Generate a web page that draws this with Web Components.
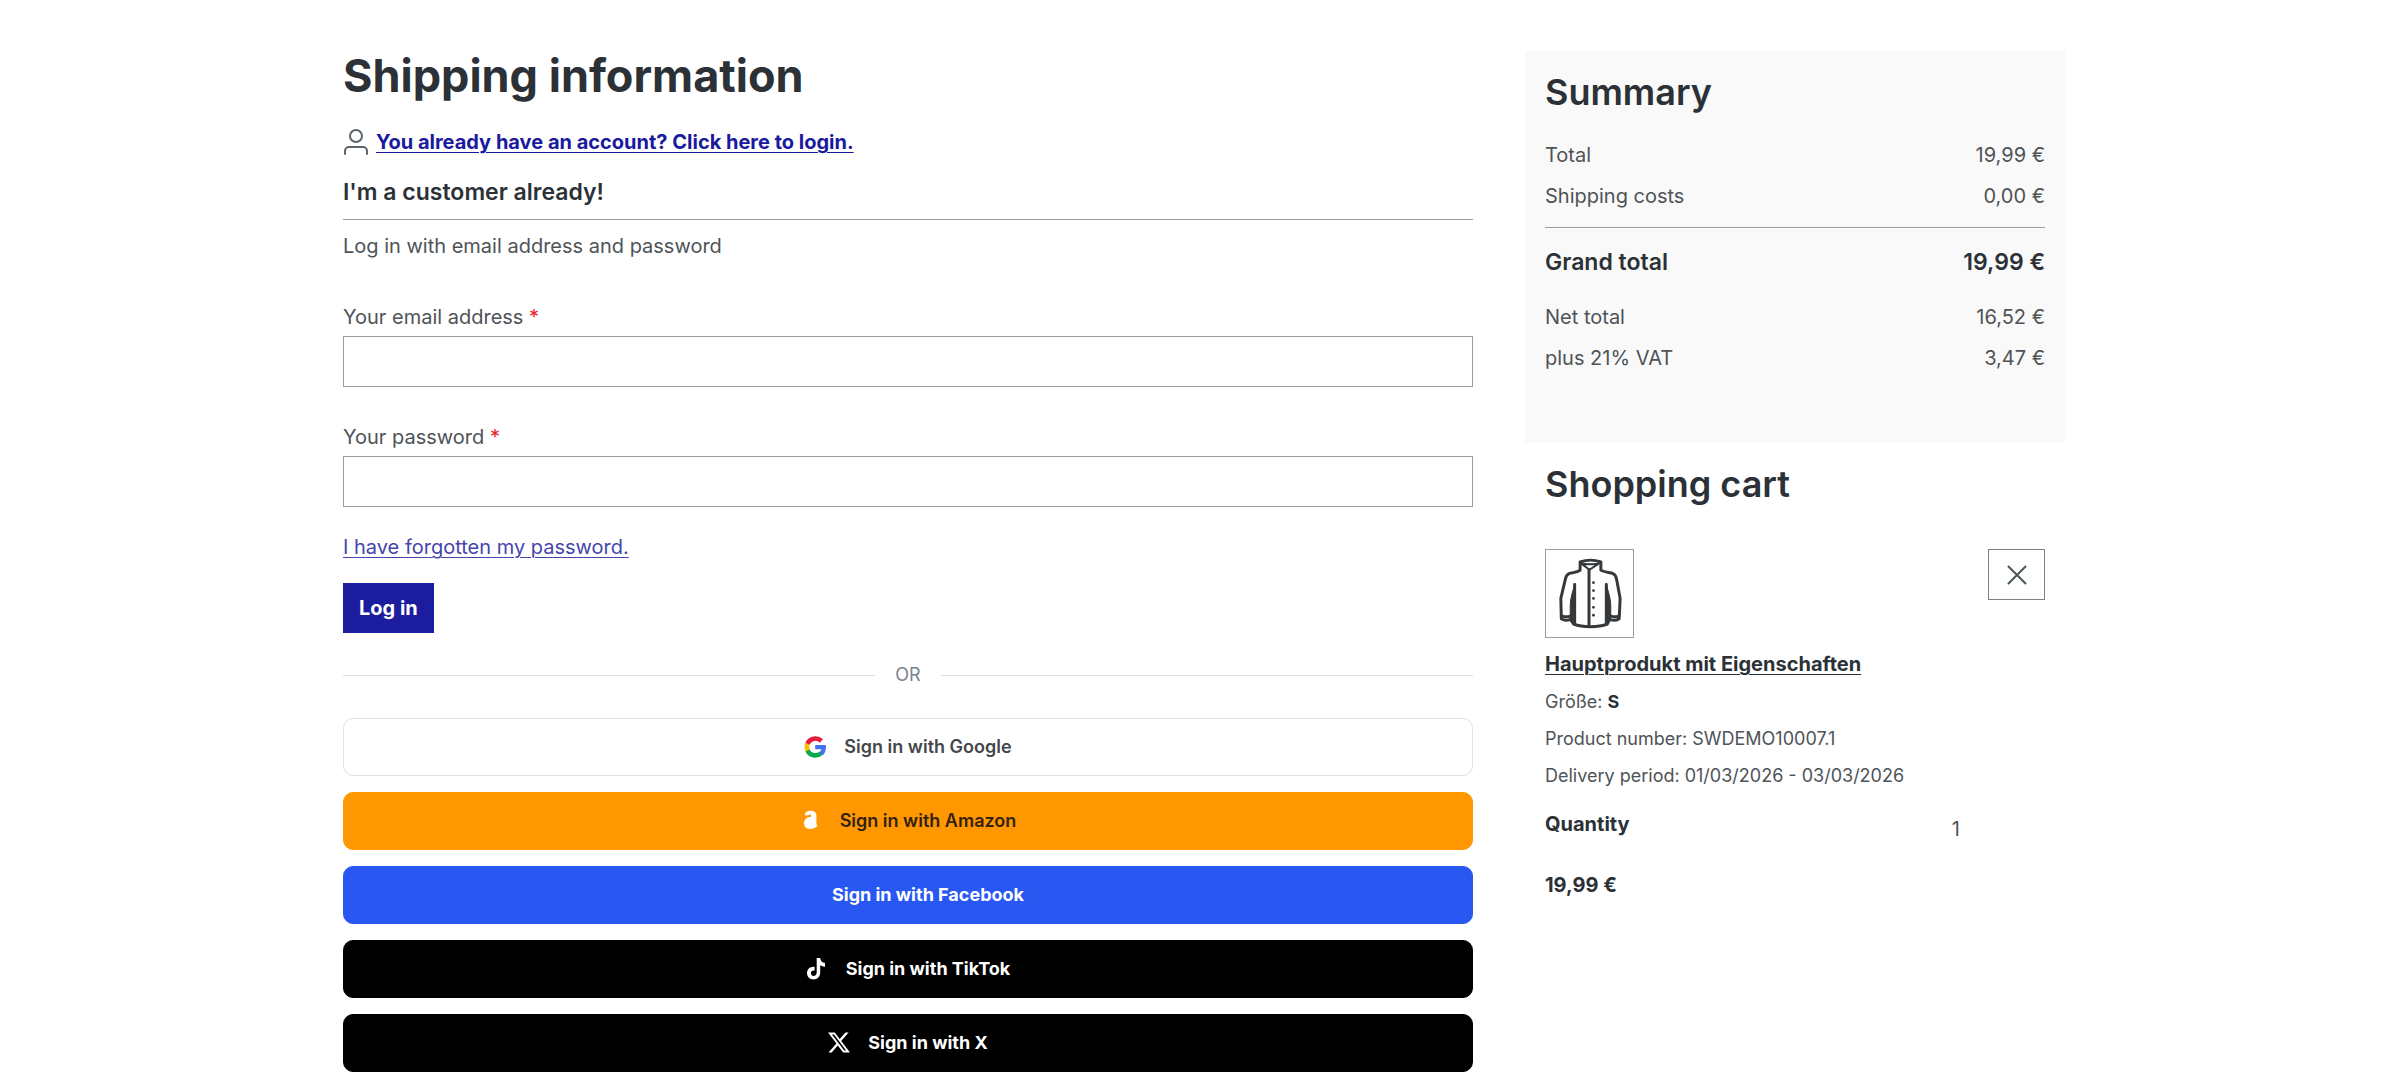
<!DOCTYPE html>
<html lang="en">
<head>
<meta charset="utf-8">
<meta name="viewport" content="width=device-width, initial-scale=1">
<title>Shipping information</title>
<style>
    body {
        margin: 0;
        background: #fff;
        color: #4e5357;
        font-family: Inter, "Liberation Sans", sans-serif;
        font-size: 20px;
        line-height: 30px;
    }
</style>
</head>
<body>

<checkout-page>
    <login-form slot="main"></login-form>
    <or-divider slot="main">OR</or-divider>
    <social-list slot="main">
        <social-button brand="google">Sign in with Google</social-button>
        <social-button brand="amazon">Sign in with Amazon</social-button>
        <social-button brand="facebook">Sign in with Facebook</social-button>
        <social-button brand="tiktok">Sign in with TikTok</social-button>
        <social-button brand="x">Sign in with X</social-button>
    </social-list>
    <order-summary slot="side"></order-summary>
    <shopping-cart slot="side">
        <cart-item></cart-item>
    </shopping-cart>
</checkout-page>

<script>
// small helper: every element clones its own template
function makeTemplate(html) {
    var template = document.createElement("template");
    template.innerHTML = html;
    return template;
}

class BaseElement extends HTMLElement {
    constructor() {
        super();
        this.attachShadow({mode: "open"});
        this.shadowRoot.appendChild(this.constructor.template.content.cloneNode(true));
    }
}

// PAGE: two columns, form left and basket right
class CheckoutPage extends BaseElement {
    static template = makeTemplate(`
<style>
    :host { display: block; padding: 51px 0 0 3px; }
    .grid {
        display: grid;
        grid-template-columns: minmax(0, 113fr) minmax(0, 54fr);
        gap: 52px;
        align-items: start;
        max-width: 1722px;
        margin: 0 auto;
    }
    @media (max-width: 900px) {
        .grid { grid-template-columns: minmax(0, 1fr); padding: 0 20px; }
    }
</style>
<div class="grid">
    <main><slot name="main"></slot></main>
    <aside><slot name="side"></slot></aside>
</div>`);
}
customElements.define("checkout-page", CheckoutPage);

// TEXT FIELD with label
class TextField extends BaseElement {
    static template = makeTemplate(`
<style>
    :host { display: block; }
    label { display: block; margin-bottom: 4px; }
    .star { color: #e52427; }
    input {
        display: block;
        box-sizing: border-box;
        width: 100%;
        height: 51px;
        padding: 8px 16px;
        border: 1px solid #989ea6;
        border-radius: 0;
        background: #fff;
        color: inherit;
        font: inherit;
    }
</style>
<label for="field"><slot></slot> <span class="star">*</span></label>
<input id="field" required>`);

    connectedCallback() {
        this.shadowRoot.querySelector("input").type = this.getAttribute("type") || "text";
    }
}
customElements.define("text-field", TextField);

// LOGIN FORM
class LoginForm extends BaseElement {
    static template = makeTemplate(`
<style>
    :host { display: block; }
    h1, h2, p { margin: 0; }
    h1 { font-size: 45px; line-height: 50px; font-weight: 700; color: #2b3136; }
    .account { display: flex; align-items: center; gap: 7px; margin-top: 26px; }
    .account svg { width: 26px; height: 26px; flex: none; }
    .account a { color: #1a1a9e; font-weight: 700; }
    h2 {
        margin-top: 19px;
        padding-bottom: 11px;
        border-bottom: 1px solid #989ea6;
        font-size: 23px;
        line-height: 32px;
        font-weight: 600;
        color: #2b3136;
    }
    .hint { margin: 11px 0 41px; }
    text-field + text-field { margin-top: 35px; }
    .forgot { margin: 25px 0 21px; }
    .forgot a { color: #4545ac; }
    a { text-underline-offset: 3px; text-decoration-thickness: 1px; }
    button {
        display: block;
        height: 50px;
        padding: 0 16px;
        border: 0;
        background: #1c1c9f;
        color: #fff;
        font: inherit;
        font-weight: 700;
        cursor: pointer;
    }
</style>
<h1>Shipping information</h1>
<div class="account">
    <svg viewBox="0 0 26 26" fill="none" stroke="#5b646b" stroke-width="2" stroke-linecap="round" aria-hidden="true">
        <circle cx="13" cy="7" r="6"/>
        <path d="M2 25v-3a4 4 0 0 1 4-4h14a4 4 0 0 1 4 4v3"/>
    </svg>
    <a href="#login">You already have an account? Click here to login.</a>
</div>
<form id="login">
    <h2>I'm a customer already!</h2>
    <p class="hint">Log in with email address and password</p>
    <text-field type="email">Your email address</text-field>
    <text-field type="password">Your password</text-field>
    <p class="forgot"><a href="#recover">I have forgotten my password.</a></p>
    <button type="submit">Log in</button>
</form>`);
}
customElements.define("login-form", LoginForm);

// DIVIDER
class OrDivider extends BaseElement {
    static template = makeTemplate(`
<style>
    :host {
        display: flex;
        align-items: center;
        gap: 20px;
        margin: 28px 0 29px;
        font-size: 18px;
        line-height: 28px;
        color: #798490;
    }
    :host::before, :host::after {
        content: "";
        flex: 1;
        height: 1px;
        background: #dcdfe2;
    }
</style>
<slot></slot>`);
}
customElements.define("or-divider", OrDivider);

// SOCIAL LOGIN
class SocialList extends BaseElement {
    static template = makeTemplate(`
<style>
    :host { display: flex; flex-direction: column; gap: 16px; }
</style>
<slot></slot>`);
}
customElements.define("social-list", SocialList);

var brandIcons = {
    google: `
        <g fill="none" stroke-width="4.600">
            <path stroke="#fbbc05" d="M3.900 15a8.700 8.700 0 0 1 0-8"/>
            <path stroke="#ea1a3c" d="M3.500 7.600A8.700 8.700 0 0 1 17.400 5"/>
            <path stroke="#0da94f" d="M3.500 14.400A8.700 8.700 0 0 0 17 17.300"/>
        </g>
        <path fill="#4272f0" d="M11.200 9h10.600c.6 4-.5 7.800-3 10.200l-3.600-2.800a5 5 0 0 0 2.100-3.200h-6.100z"/>`,
    amazon: `
        <path fill="#fff" d="M4.600 5C5.400 2.200 7.600.8 10.500.8c3.800 0 5.900 1.800 5.900 5v6.700c0 1.600.3 2.600 1 3.400l-2 1.700c-1.200.9-3 1.400-5.400 1.400C6.300 19 4 16.800 4 13.300c0-2.600 1.200-4.500 3.200-5.500z"/>
        <path fill="#ff9700" d="M4 5.200l4.200.3c.6-1 1.600-1.200 2.800-.6v2.200c-2.400 0-4.600.5-6.600 1.800z"/>`,
    facebook: ``,
    tiktok: `
        <path fill="#fff" d="M10.700 0h3.500c.3 2.800 1.900 4.600 4.800 4.900v3.800c-1.800.1-3.400-.4-4.800-1.400v7.300c0 4.200-3 7-6.700 7-3.800 0-6.500-2.900-6.500-6.500 0-4 3.300-6.900 7.600-6.400v4c-2-.5-3.700.6-3.700 2.500 0 1.500 1.200 2.700 2.700 2.700 1.700 0 3.100-1.200 3.100-3.400z"/>`,
    x: `
        <path fill="#fff" fill-rule="evenodd" d="M0 .5h6.800l4.900 6.500L17.400.5h3.200l-7.400 8.400L22 20.500h-6.800l-5.400-7-6.100 7H.5l7.900-9L0 .5zm3.900 1.900 12.300 16.200h1.900L6 2.400z"/>`
};

class SocialButton extends BaseElement {
    static template = makeTemplate(`
<style>
    :host { display: block; --bg: #fff; --fg: #44484c; --line: var(--bg); --weight: 700; }
    :host([brand="google"]) { --line: #dfe1e5; --weight: 600; }
    :host([brand="amazon"]) { --bg: #ff9700; --fg: #33220f; --weight: 600; }
    :host([brand="facebook"]) { --bg: #2857f2; --fg: #fff; }
    :host([brand="tiktok"]), :host([brand="x"]) { --bg: #000; --fg: #fff; }
    button {
        display: flex;
        align-items: center;
        justify-content: center;
        gap: 18px;
        box-sizing: border-box;
        width: 100%;
        height: 58px;
        padding: 0 16px;
        border: 1px solid var(--line);
        border-radius: 10px;
        background: var(--bg);
        color: var(--fg);
        font: inherit;
        font-size: 18px;
        font-weight: var(--weight);
        cursor: pointer;
    }
    svg { width: 22px; height: 22px; flex: none; }
</style>
<button type="button">
    <svg viewBox="0 0 22 22" aria-hidden="true"></svg>
    <span><slot></slot></span>
</button>`);

    connectedCallback() {
        this.shadowRoot.querySelector("svg").innerHTML = brandIcons[this.getAttribute("brand")];
    }
}
customElements.define("social-button", SocialButton);

// SUMMARY BOX
class OrderSummary extends BaseElement {
    static template = makeTemplate(`
<style>
    :host {
        display: block;
        padding: 20px 20px 70px;
        background: #f9f9f9;
    }
    h2 { margin: 0 0 27px; font-size: 36px; line-height: 42px; font-weight: 600; color: #2b3136; }
    dl { display: grid; gap: 11px; margin: 0; }
    dl div { display: flex; justify-content: space-between; }
    dd { margin: 0; }
    .grand {
        margin: 5px 0 13px;
        padding-top: 18px;
        border-top: 1px solid #989ea6;
        font-size: 23px;
        line-height: 32px;
        font-weight: 600;
        color: #2b3136;
    }
</style>
<h2>Summary</h2>
<dl>
    <div><dt>Total</dt><dd>19,99 €</dd></div>
    <div><dt>Shipping costs</dt><dd>0,00 €</dd></div>
    <div class="grand"><dt>Grand total</dt><dd>19,99 €</dd></div>
    <div><dt>Net total</dt><dd>16,52 €</dd></div>
    <div><dt>plus 21% VAT</dt><dd>3,47 €</dd></div>
</dl>`);
}
customElements.define("order-summary", OrderSummary);

// CART
class ShoppingCart extends BaseElement {
    static template = makeTemplate(`
<style>
    :host { display: block; padding: 20px; }
    h2 { margin: 0 0 44px; font-size: 36px; line-height: 42px; font-weight: 600; color: #2b3136; }
</style>
<h2>Shopping cart</h2>
<slot></slot>`);
}
customElements.define("shopping-cart", ShoppingCart);

class CartItem extends BaseElement {
    static template = makeTemplate(`
<style>
    :host { display: block; }
    .top { display: flex; justify-content: space-between; align-items: flex-start; }
    .thumb {
        display: block;
        box-sizing: border-box;
        width: 89px;
        height: 89px;
        border: 1px solid #989ea6;
    }
    .thumb svg { display: block; width: 100%; height: 100%; }
    button {
        display: flex;
        align-items: center;
        justify-content: center;
        box-sizing: border-box;
        width: 57px;
        height: 51px;
        padding: 0;
        border: 1px solid #7d8185;
        background: #fff;
        cursor: pointer;
    }
    button svg { width: 20px; height: 20px; }
    .name {
        display: block;
        width: fit-content;
        margin: 11px 0 10px;
        color: #2b3136;
        font-weight: 700;
        text-underline-offset: 3px;
        text-decoration-thickness: 1px;
    }
    ul {
        display: grid;
        gap: 11px;
        margin: 0;
        padding: 0;
        list-style: none;
        font-size: 18px;
        line-height: 26px;
    }
    b { color: #2b3136; font-weight: 700; }
    .quantity { display: grid; grid-template-columns: 1fr auto 17%; margin: 20px 0 26px; }
    .quantity span { padding-top: 5px; }
</style>
<div class="top">
    <a class="thumb" href="#product" aria-label="Hauptprodukt mit Eigenschaften">
        <svg viewBox="0 0 88 88" fill="none" stroke="#35383b" stroke-width="3" stroke-linejoin="round" stroke-linecap="round" aria-hidden="true">
            <path d="M34.500 12c6-2 15-2 21 0v8.500c5 2.500 9 2 12.500 3.500 2 1 3 3 3.500 6l3.500 19-1 20.500c-3 2-6.500 2-9.500.5L62 75c-9 3.500-25 3.500-34 0l-3.500-5c-3 1.500-6 1.500-9-.5L15 49l4.500-19c.5-3 1.500-5 3.500-6 4-1.500 8-1 11.500-3.500z"/>
            <path fill="#35383b" stroke-width="1" d="M29 34c-1.500 8-4.500 14-4.500 22v14l4 4zM61 34c1.500 8 4.500 14 4.500 22v14l-4 4z"/>
            <path d="M29 35v40M61 35v40M43.500 20v56M16 66.500c3 1.500 6 1.500 9 0M74 66.500c-3 1.500-6 1.500-9 0"/>
            <path stroke-width="2" d="M35 13c5 2 15 2 20 0M36 14l8 6 9-6"/>
            <g fill="#35383b" stroke="none">
                <circle cx="48" cy="33" r="1.400"/><circle cx="48" cy="41" r="1.400"/><circle cx="48" cy="49" r="1.400"/>
                <circle cx="48" cy="58" r="1.400"/><circle cx="48" cy="66" r="1.400"/>
            </g>
        </svg>
    </a>
    <button type="button" aria-label="Remove">
        <svg viewBox="0 0 20 20" stroke="#4a545b" stroke-width="2" stroke-linecap="round" aria-hidden="true">
            <path d="M1.500 1.500l17 17M18.500 1.500l-17 17"/>
        </svg>
    </button>
</div>
<a class="name" href="#product">Hauptprodukt mit Eigenschaften</a>
<ul>
    <li>Größe: <b>S</b></li>
    <li>Product number: SWDEMO10007.1</li>
    <li>Delivery period: 01/03/2026 - 03/03/2026</li>
</ul>
<div class="quantity"><b>Quantity</b><span>1</span></div>
<b>19,99 €</b>`);
}
customElements.define("cart-item", CartItem);
</script>
</body>
</html>
